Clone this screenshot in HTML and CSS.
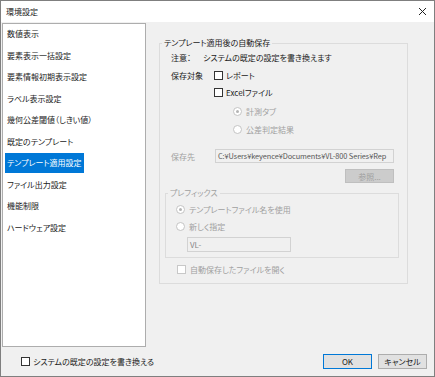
FILE: index.html
```html
<!DOCTYPE html>
<html lang="ja">
<head>
    <meta charset="UTF-8">
    <title>環境設定</title>
    <link rel="stylesheet" href="styles.css">
</head>
<body>
    <div class="window">
        <div class="titlebar">
            <span class="title">環境設定</span>
            <svg class="close" width="9" height="9" viewBox="0 0 9 9">
                <path d="M1 1L8 8M8 1L1 8" stroke="#222" stroke-width="1"/>
            </svg>
        </div>

        <div class="content">
            <ul class="nav">
                <li>数値表示</li>
                <li>要素表示一括設定</li>
                <li>要素情報初期表示設定</li>
                <li>ラベル表示設定</li>
                <li>幾何公差閾値（しきい値）</li>
                <li>既定のテンプレート</li>
                <li class="active">テンプレート適用設定</li>
                <li>ファイル出力設定</li>
                <li>機能制限</li>
                <li>ハードウェア設定</li>
            </ul>

            <div class="pane">
                <fieldset class="group">
                    <legend>テンプレート適用後の自動保存</legend>
                    <div class="row note">
                        <span class="label">注意：</span>
                        <span>システムの既定の設定を書き換えます</span>
                    </div>
                    <div class="row target">
                        <span class="label">保存対象</span>
                        <span class="check"></span>
                        <span>レポート</span>
                    </div>
                    <div class="row excel">
                        <span class="check"></span>
                        <span>Excelファイル</span>
                    </div>
                    <div class="row sub disabled">
                        <span class="radio checked"></span>
                        <span>計測タブ</span>
                    </div>
                    <div class="row sub sub2 disabled">
                        <span class="radio"></span>
                        <span>公差判定結果</span>
                    </div>
                    <div class="row dest">
                        <span class="label disabled">保存先</span>
                        <div class="textbox path">C:¥Users¥keyence¥Documents¥VL-800 Series¥Rep</div>
                    </div>
                    <div class="row browse">
                        <button class="btn-disabled">参照...</button>
                    </div>

                    <fieldset class="prefix">
                        <legend>プレフィックス</legend>
                        <div class="row disabled">
                            <span class="radio checked"></span>
                            <span>テンプレートファイル名を使用</span>
                        </div>
                        <div class="row pr2 disabled">
                            <span class="radio"></span>
                            <span>新しく指定</span>
                        </div>
                        <div class="textbox vl">VL-</div>
                    </fieldset>

                    <div class="row autoopen disabled">
                        <span class="check"></span>
                        <span>自動保存したファイルを開く</span>
                    </div>
                </fieldset>
            </div>
        </div>

        <div class="footer">
            <div class="sys-check">
                <span class="check"></span>
                <span>システムの既定の設定を書き換える</span>
            </div>
            <div class="buttons">
                <button class="btn default">OK</button>
                <button class="btn">キャンセル</button>
            </div>
        </div>
    </div>
</body>
</html>
```

FILE: styles.css
```css
body {
    margin: 0;
    font-family: "Noto Sans CJK JP", "Noto Sans", sans-serif;
    font-size: 8px;
    font-feature-settings: "palt";
    color: #1a1a1a;
}

.window {
    width: 435px;
    height: 377px;
    box-sizing: border-box;
    border: 1px solid #7f7f7f;
    background: #f0f0f0;
    display: flex;
    flex-direction: column;
}

.titlebar {
    height: 21px;
    flex: none;
    background: #fff;
    display: flex;
    align-items: center;
    justify-content: space-between;
    padding: 0 7px 0 5px;
}

.close {
    display: block;
}

.content {
    display: flex;
    padding: 1px 0 0 1px;
}

/* left menu */
.nav {
    list-style: none;
    margin: 0;
    padding: 0 2px;
    width: 144px;
    height: 324px;
    box-sizing: border-box;
    background: #fff;
    border: 1px solid #adadad;
}

.nav li {
    width: fit-content;
    height: 20px;
    line-height: 20px;
    padding: 0 2px;
    margin-bottom: 1.5px;
}

.nav li.active {
    background: #0078d7;
    color: #fff;
}

/* right pane */
.pane {
    padding: 15px 0 0 13px;
}

fieldset {
    margin: 0;
    border: 1px solid #dcdcdc;
    min-width: 0;
}

legend {
    line-height: 10px;
    padding: 0 2px;
}

.group {
    width: 249px;
    box-sizing: border-box;
    padding: 2px 13px 7px 11px;
}

.group > legend {
    margin-left: -9px;
}

.row {
    display: flex;
    align-items: center;
    height: 14px;
}

.label {
    flex: none;
}

.note .label {
    width: 32px;
}

.target {
    margin-top: 4px;
}

.target .label {
    width: 43px;
}

.excel {
    margin-top: 3px;
    padding-left: 43px;
}

.sub {
    margin-top: 5px;
    padding-left: 62px;
}

.sub2 {
    margin-top: 4px;
}

.dest {
    margin-top: 13px;
}

.dest .label {
    width: 44px;
}

.browse {
    margin-top: 6px;
    justify-content: flex-end;
}

.disabled {
    color: #a0a0a0;
}

.check {
    width: 9px;
    height: 9px;
    box-sizing: border-box;
    border: 1px solid #333;
    background: #fff;
    margin-right: 3px;
    flex: none;
}

.disabled .check {
    border-color: #c8c8c8;
}

.radio {
    width: 9px;
    height: 9px;
    box-sizing: border-box;
    border: 1px solid #c4c4c4;
    border-radius: 50%;
    background: #fff;
    margin-right: 4px;
    flex: none;
    display: flex;
    align-items: center;
    justify-content: center;
}

.radio.checked::after {
    content: "";
    width: 3px;
    height: 3px;
    border-radius: 50%;
    background: #b4b4b4;
}

.textbox {
    box-sizing: border-box;
    border: 1px solid #d2d2d2;
    background: #f0f0f0;
    padding: 0 2px;
    white-space: nowrap;
    overflow: hidden;
}

.path {
    flex: 1;
    height: 14px;
    line-height: 12px;
    font-size: 7.4px;
    letter-spacing: -0.1px;
    color: #555;
}

.btn-disabled {
    width: 49px;
    height: 14px;
    padding: 0;
    font: inherit;
    font-feature-settings: "palt";
    background: #cccccc;
    border: 1px solid #bfbfbf;
    color: #a0a0a0;
}

/* prefix box */
.prefix {
    margin: 5px -5px 0 -6px;
    padding: 4px 10px 5px 10px;
    color: #a0a0a0;
}

.prefix > legend {
    margin-left: -8px;
}

.pr2 {
    margin-top: 3px;
}

.vl {
    width: 104px;
    height: 15px;
    line-height: 13px;
    margin: 4px 0 0 11px;
    color: #888;
}

.autoopen {
    margin-top: 4px;
    padding-left: 6px;
}

.autoopen .check {
    margin-right: 4px;
}

/* footer */
.footer {
    flex: 1;
    display: flex;
    align-items: center;
    justify-content: space-between;
    padding: 0 7px 0 20px;
}

.sys-check {
    display: flex;
    align-items: center;
}

.buttons {
    display: flex;
    gap: 6px;
}

.btn {
    width: 49px;
    height: 15px;
    padding: 0;
    font: inherit;
    font-feature-settings: "palt";
    color: #1a1a1a;
    background: #e1e1e1;
    border: 1px solid #adadad;
}

.btn.default {
    border-color: #0078d7;
}
```
